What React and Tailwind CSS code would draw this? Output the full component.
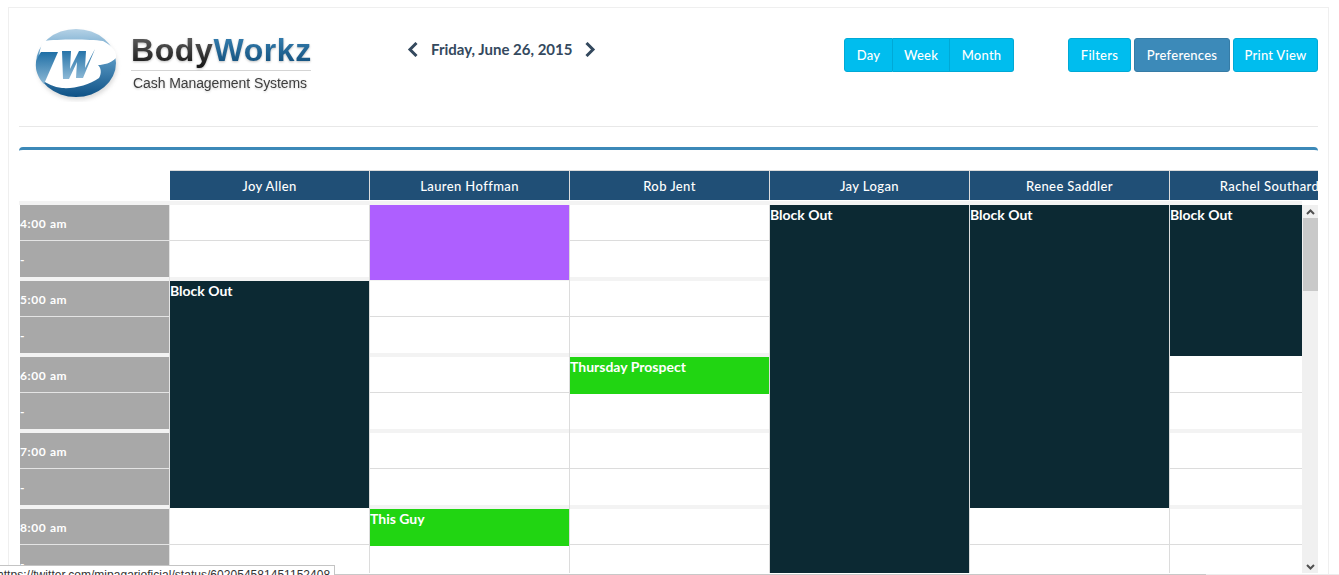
import React from "react";

const F = { fontFamily: 'Lato, "Noto Sans", sans-serif' };

function Logo() {
  return (
    <div className="flex items-start">
      <svg width="96" height="78" viewBox="0 0 96 78" className="shrink-0">
        <defs>
          <linearGradient id="lg1" x1="0" y1="0" x2="0" y2="1">
            <stop offset="0" stopColor="#b5d2e6" />
            <stop offset="0.4" stopColor="#5c9bc6" />
            <stop offset="1" stopColor="#0f5286" />
          </linearGradient>
          <linearGradient id="lg2" x1="0" y1="0" x2="0" y2="1">
            <stop offset="0" stopColor="#1f6fa6" />
            <stop offset="1" stopColor="#8db9d6" />
          </linearGradient>
          <filter id="ls" x="-10%" y="-10%" width="120%" height="125%">
            <feGaussianBlur stdDeviation="2" />
          </filter>
        </defs>
        <ellipse cx="48" cy="42" rx="40" ry="34" fill="#999" opacity="0.35" filter="url(#ls)" />
        <ellipse cx="47" cy="39" rx="40" ry="34" fill="url(#lg1)" />
        <path d="M14 17 C 30 15 60 15 74 17 C 84 22 88 28 87 34 C 82 39 75 41 69 41 C 72 44 73 49 70 54 C 60 61 45 65 33 64 C 25 63 18 60 12 55 C 8 45 9 28 14 17 Z" fill="#fff" />
        <path d="M12 28 L29 28 L15 60 C 9 54 6 46 7 38 C 8 34 10 31 12 28 Z" fill="url(#lg2)" />
        <path d="M33 27 L42 27 L41 45 L50 27 L57 27 L56 44 L66 25 L54 54 L47 54 L48 38 L40 55 L34 55 Z" fill="url(#lg2)" />
      </svg>
      <div className="ml-[6px] pt-[8px] w-[190px]">
        <div
          className="text-[32px] leading-[36px] font-bold tracking-[0.6px] whitespace-nowrap drop-shadow-[0_1px_1px_rgba(0,0,0,0.25)]"
          style={{ fontFamily: '"Liberation Sans", sans-serif' }}
        >
          <span className="bg-linear-to-b from-[#6a6a6a] to-[#141414] bg-clip-text text-transparent">Body</span>
          <span className="bg-linear-to-b from-[#3a86b8] to-[#0e4a76] bg-clip-text text-transparent">Workz</span>
        </div>
        <div className="h-px bg-[#d4d4d4] mt-[2px] w-[180px]"></div>
        <div
          className="text-[14px] leading-[16px] mt-[4px] ml-[2px] tracking-[-0.08px] text-[#3d3d3d] whitespace-nowrap drop-shadow-[0_1px_1px_rgba(0,0,0,0.2)]"
          style={{ fontFamily: '"Liberation Sans", sans-serif' }}
        >
          Cash Management Systems
        </div>
      </div>
    </div>
  );
}

function Chev({ dir }) {
  return (
    <svg width="11" height="15" viewBox="0 0 11 15" className="shrink-0">
      <path
        d={dir === "l" ? "M9.5 1 L3 7.5 L9.5 14" : "M1.5 1 L8 7.5 L1.5 14"}
        fill="none"
        stroke="#34495e"
        strokeWidth="3"
      />
    </svg>
  );
}

function Btn({ children, className = "" }) {
  return (
    <button
      className={
        "h-[34px] pt-px bg-[#00bdee] border border-[#00a9d6] text-white text-[13px] font-medium tracking-[0.25px] flex items-center justify-center " +
        className
      }
      style={F}
    >
      {children}
    </button>
  );
}

const heads = ["Joy Allen", "Lauren Hoffman", "Rob Jent", "Jay Logan", "Renee Saddler", "Rachel Southard"];

function A({ tall }) {
  return <div className={(tall ? "h-[37px]" : "h-[36px]") + " bg-white border-b border-[#dcdcdc] shrink-0"}></div>;
}
function B() {
  return <div className="h-[36px] bg-white shrink-0"></div>;
}
function Gap() {
  return <div className="h-[4px] bg-[#f3f3f3] shrink-0"></div>;
}
function Hour() {
  return (
    <>
      <A />
      <B />
      <Gap />
    </>
  );
}
function Ev({ h, color, label }) {
  return (
    <div className={"shrink-0 text-white font-bold text-[14px] leading-[20px] " + h + " " + color} style={F}>
      {label}
    </div>
  );
}

function Col({ children, w = "w-[200px]" }) {
  return <div className={"shrink-0 flex flex-col border-r border-[#dcdcdc] " + w}>{children}</div>;
}

function TimeCol() {
  const hours = ["4:00 am", "5:00 am", "6:00 am", "7:00 am", "8:00 am"];
  return (
    <div className="w-[151px] shrink-0 flex flex-col pl-px border-r border-[#e4e4e4]">
      {hours.map((t) => (
        <React.Fragment key={t}>
          <div
            className="h-[36px] shrink-0 bg-[#a8a8a8] border-b border-[#e4e4e4] text-white text-[12px] font-bold tracking-[0.6px] leading-[38px]"
            style={F}
          >
            {t}
          </div>
          <div
            className="h-[36px] shrink-0 bg-[#a8a8a8] text-white text-[12px] font-bold leading-[38px]"
            style={F}
          >
            -
          </div>
          <div className="h-[4px] shrink-0 bg-[#f3f3f3]"></div>
        </React.Fragment>
      ))}
    </div>
  );
}

export default function App() {
  const dark = "bg-[#0c2933]";
  const green = "bg-[#21d512]";
  return (
    <div className="relative w-[1339px] h-[575px] overflow-hidden bg-white">
      <div className="absolute left-[8px] top-[7px] w-[1321px] h-[568px] border border-b-0 border-[#efefef] pointer-events-none"></div>
      <div className="pt-[20px] pl-[19px] pr-[21px]">
        <div className="h-[107px] border-b border-[#e8e8e8] flex items-start">
          <div className="w-[294px] pl-[10px] pt-[4px] shrink-0">
            <Logo />
          </div>
          <div className="ml-[94px] mt-[20px] w-[190px] flex items-center gap-[13px] shrink-0">
            <Chev dir="l" />
            <div className="text-[#34495e] font-bold text-[15px] leading-[18px] whitespace-nowrap" style={F}>
              Friday, June 26, 2015
            </div>
            <Chev dir="r" />
          </div>
          <div className="ml-[247px] mt-[18px] flex shrink-0">
            <Btn className="w-[49px] rounded-l-[3px]">Day</Btn>
            <Btn className="w-[57px] border-l-0">Week</Btn>
            <Btn className="w-[64px] border-l-0 rounded-r-[3px]">Month</Btn>
          </div>
          <div className="ml-[54px] mt-[18px] flex gap-[3px] shrink-0">
            <Btn className="w-[63px] rounded-[3px]">Filters</Btn>
            <Btn className="w-[96px] rounded-[3px] !bg-[#3c8ab9] !border-[#367ca6]">Preferences</Btn>
            <Btn className="w-[85px] rounded-[3px]">Print View</Btn>
          </div>
        </div>

        <div className="mt-[20px] w-[1299px] border-t-[3px] border-[#3c89b8] rounded-t-[4px] overflow-hidden h-[426px]">
          <div className="h-[20px]"></div>
          <div className="flex h-[30px] overflow-hidden">
            <div className="w-[151px] shrink-0"></div>
            {heads.map((h) => (
              <div
                key={h}
                className="w-[200px] shrink-0 pt-[3px] bg-[#204f76] border-t border-r border-[#dcdcdc] text-white text-[13px] font-medium tracking-[0.4px] flex items-center justify-center whitespace-nowrap"
                style={F}
              >
                {h}
              </div>
            ))}
          </div>
          <div className="h-[5px] bg-[#f3f3f3] mr-[16px] border-t border-white"></div>
          <div className="flex h-[368px]">
            <div className="w-[1283px] flex overflow-hidden">
              <TimeCol />
              <Col>
                <Hour />
                <Ev h="h-[227px]" color={dark} label="Block Out" />
                <A tall />
                <B />
              </Col>
              <Col>
                <Ev h="h-[75px]" color="bg-[#ae5fff]" label="" />
                <div className="h-px bg-[#f3f3f3] shrink-0"></div>
                <Hour />
                <Hour />
                <Hour />
                <Ev h="h-[37px]" color={green} label="This Guy" />
                <B />
              </Col>
              <Col>
                <Hour />
                <Hour />
                <Ev h="h-[37px]" color={green} label="Thursday Prospect" />
                <div className="h-[35px] bg-white shrink-0"></div>
                <Gap />
                <Hour />
                <A />
                <B />
              </Col>
              <Col>
                <Ev h="h-[368px]" color={dark} label="Block Out" />
              </Col>
              <Col>
                <Ev h="h-[303px]" color={dark} label="Block Out" />
                <A tall />
                <B />
              </Col>
              <div className="w-[132px] shrink-0 flex flex-col">
                <Ev h="h-[151px]" color={dark} label="Block Out" />
                <A tall />
                <B />
                <Gap />
                <Hour />
                <A />
                <B />
              </div>
            </div>
            <div className="w-[16px] shrink-0 bg-[#f0f0f0] flex flex-col items-center">
              <div className="h-[13px] flex items-center justify-center">
                <svg width="9" height="6" viewBox="0 0 9 6">
                  <path d="M1 5 L4.5 1.5 L8 5" fill="none" stroke="#505050" strokeWidth="2" />
                </svg>
              </div>
              <div className="h-[73px] w-[15px] bg-[#c9c9c9]"></div>
              <div className="flex-1"></div>
              <div className="h-[13px] flex items-center justify-center">
                <svg width="9" height="6" viewBox="0 0 9 6">
                  <path d="M1 1 L4.5 4.5 L8 1" fill="none" stroke="#505050" strokeWidth="2" />
                </svg>
              </div>
            </div>
          </div>
        </div>
      </div>
      <div className="absolute left-0 right-0 bottom-0 h-px bg-[#ececec]">
        <div className="h-px w-[1206px] bg-[#c8c8c8]"></div>
      </div>
      <div
        className="absolute left-0 bottom-0 w-[335px] h-[10px] bg-white border-t border-r border-[#c4c4c4] overflow-hidden whitespace-nowrap text-[12px] leading-[19px] tracking-[0.03px] text-[#333]"
        style={{ fontFamily: '"Liberation Sans", sans-serif' }}
      >
        <span className="ml-[-3px]">https://twitter.com/mipagarioficial/status/602054581451152408</span>
      </div>
    </div>
  );
}
